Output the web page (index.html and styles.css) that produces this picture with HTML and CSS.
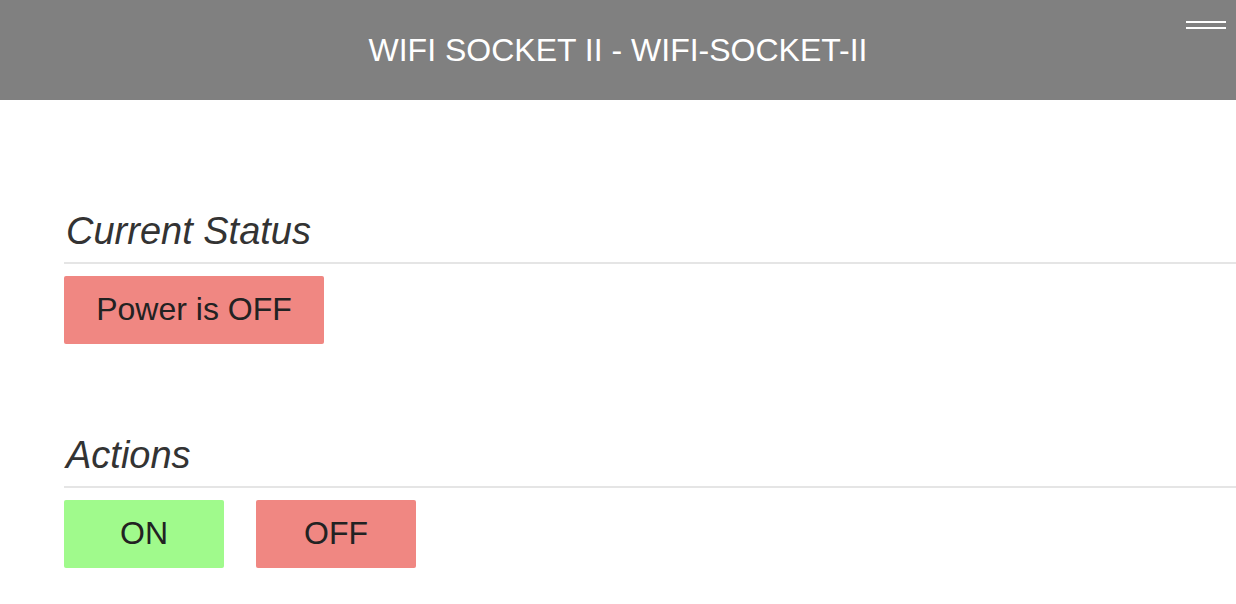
FILE: index.html
```html
<!DOCTYPE html>
<html>
<head>
<meta charset="utf-8">
<link rel="stylesheet" href="styles.css">
</head>
<body>
<header class="topbar">
  <h1 class="title">WIFI SOCKET II - WIFI-SOCKET-II</h1>
  <div class="menu"><span></span><span></span></div>
</header>
<main class="content">
  <section class="section">
    <h2 class="heading">Current Status</h2>
    <div class="rule"></div>
    <div class="row">
      <div class="box off status">Power is OFF</div>
    </div>
  </section>
  <section class="section">
    <h2 class="heading">Actions</h2>
    <div class="rule"></div>
    <div class="row">
      <button class="box on btn">ON</button>
      <button class="box off btn">OFF</button>
    </div>
  </section>
</main>
</body>
</html>
```
FILE: styles.css
```css
html, body {
  margin: 0;
  padding: 0;
  background: #fff;
  font-family: "Liberation Sans", Arial, sans-serif;
  color: #222;
}
.topbar {
  position: relative;
  height: 100px;
  background: #808080;
  display: flex;
  align-items: center;
  justify-content: center;
}
.title {
  margin: 0;
  font-weight: normal;
  font-size: 32px;
  color: #fff;
}
.menu {
  position: absolute;
  top: 21px;
  right: 10px;
  width: 40px;
  display: flex;
  flex-direction: column;
  gap: 4px;
}
.menu span {
  display: block;
  height: 2px;
  background: #fff;
}
.content {
  padding: 110px 0 0 64px;
  display: flex;
  flex-direction: column;
  gap: 90px;
}
.heading {
  margin: 0 0 0 2px;
  font-size: 38px;
  font-style: italic;
  font-weight: normal;
  color: #333;
  line-height: 42px;
}
.rule {
  height: 2px;
  background: #e5e5e5;
  margin: 10px 0 12px;
}
.row {
  display: flex;
  gap: 32px;
}
.box {
  height: 68px;
  border-radius: 2px;
  border: none;
  font-family: inherit;
  font-size: 32px;
  color: #222;
  display: flex;
  align-items: center;
  justify-content: center;
  padding: 0 0 2px;
  box-sizing: border-box;
}
.status {
  width: 260px;
}
.btn {
  width: 160px;
}
.off {
  background: #f08782;
}
.on {
  background: #a0fa8c;
}
```
